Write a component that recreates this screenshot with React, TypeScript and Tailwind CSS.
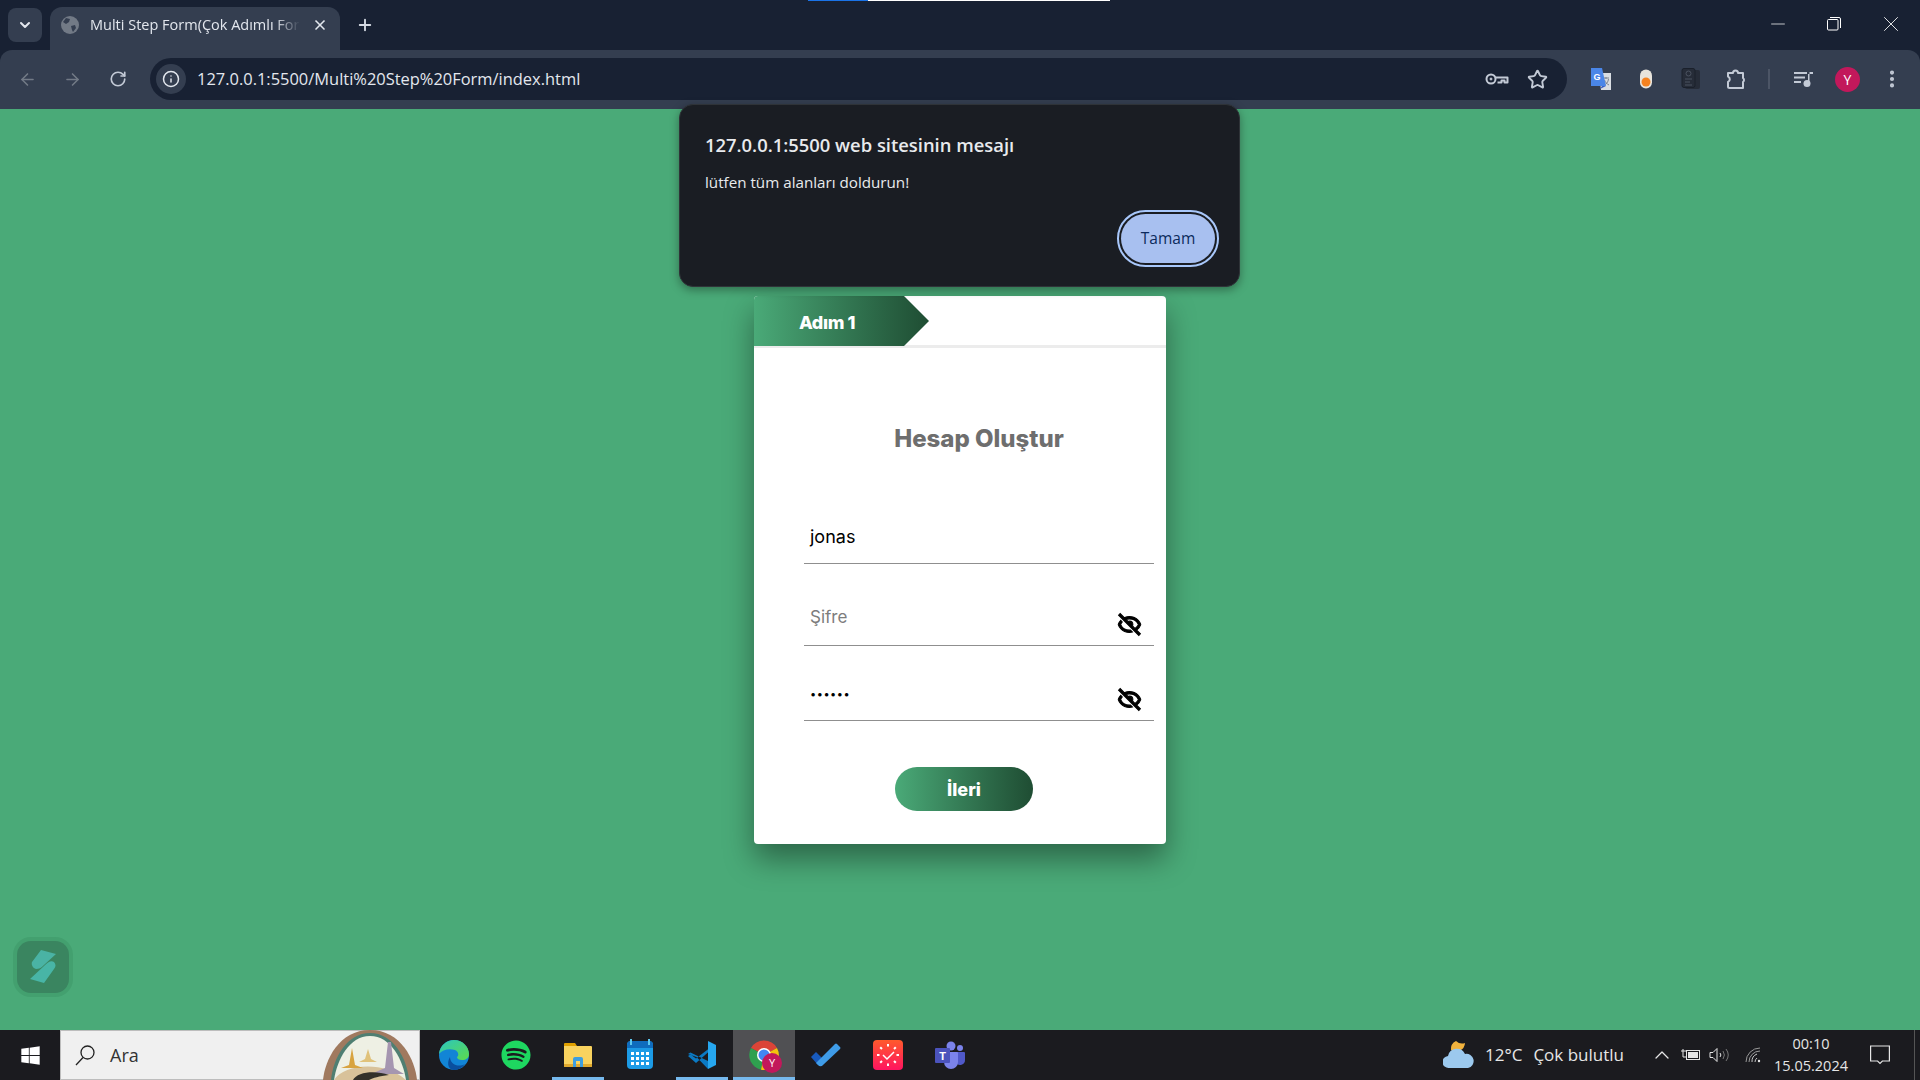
import React from 'react';
import { ArrowLeft, ArrowRight, ChevronDown, ChevronUp, EllipsisVertical, Info, Minus, Plus, RotateCw, Star, X } from 'lucide-react';
import { BiHide } from 'react-icons/bi';
import { FaSpotify, FaWindows } from 'react-icons/fa';

function Globe() {
  return (
    <svg width="18" height="18" viewBox="0 0 18 18">
      <circle cx="9" cy="9" r="9" fill="#727a86" />
      <path d="M5 2l4 1-1 3-3 2-3-2zM10 10l4-1 1 3-3 4-1-2z" fill="#343e50" />
    </svg>
  );
}

function KeyIcon() {
  return (
    <svg width="24" height="14" viewBox="0 0 24 14" fill="none" stroke="#c3cad6" strokeWidth="2">
      <circle cx="6" cy="7" r="4.500" />
      <circle cx="6" cy="7" r="1" fill="#c3cad6" strokeWidth="1" />
      <path d="M10.500 5.500H22.500V10.500H19.500V8.500H16.500V10.500H12.500" strokeLinejoin="round" />
    </svg>
  );
}

function TranslateIcon() {
  return (
    <svg width="22" height="22" viewBox="0 0 22 22">
      <path d="M9 5h12v17H11z" fill="#d9dde2" />
      <path d="M13 10h6M16 9v2M14 17c3-1 4-3 4.500-6M14.500 12c1 2.500 2.500 4 4.500 5" stroke="#7c8490" strokeWidth="1" fill="none" />
      <path d="M1 0h11l4 18H1z" fill="#4a86e8" />
      <path d="M12 18l-2 3 6-3z" fill="#3b5fc0" />
      <text x="3.500" y="12" fontSize="9" fontWeight="700" fill="#fff" fontFamily="Liberation Sans">G</text>
    </svg>
  );
}

function BlobIcon() {
  return (
    <svg width="14" height="20" viewBox="0 0 14 20">
      <rect x="1" y="0.500" width="12" height="19" rx="6" fill="#e8e4dc" />
      <circle cx="7" cy="13" r="4.500" fill="#f58220" />
    </svg>
  );
}

function DarkCardIcon() {
  return (
    <svg width="20" height="22" viewBox="0 0 20 22">
      <rect x="4" y="2" width="15" height="19" rx="2" fill="#262c38" />
      <rect x="1" y="0.500" width="13" height="19" rx="2" fill="#262c38" stroke="#1a202b" />
      <circle cx="7.500" cy="5.500" r="2.500" fill="none" stroke="#4b5361" />
      <path d="M4 11h7M4 14h5M4 17h7" stroke="#4b5361" />
    </svg>
  );
}

function PuzzleIcon() {
  return (
    <svg width="22" height="22" viewBox="0 0 22 22" fill="none" stroke="#c3cad6" strokeWidth="2" strokeLinejoin="round">
      <path d="M2 5h5a2.500 2.500 0 0 1 5 0h5v5a2.500 2.500 0 0 1 0 4v6H3.500a1.500 1.500 0 0 1-1.500-1.500V14a3 3 0 0 0 0-5.500z" />
    </svg>
  );
}

function MediaIcon() {
  return (
    <svg width="20" height="16" viewBox="0 0 20 16" fill="#c3cad6">
      <path d="M0 1h13v2H0zM0 5.500h11v2H0zM0 10h7v2H0z" />
      <path d="M14 3h5V1h-3.500v10H14z" />
      <circle cx="13" cy="12.500" r="3.500" />
    </svg>
  );
}

function EdgeIcon() {
  return (
    <svg width="32" height="32" viewBox="0 0 32 32">
      <defs>
        <linearGradient id="edgeA" x1="0" y1="0" x2="1" y2="1">
          <stop offset="0" stopColor="#2bc6c0" />
          <stop offset="1" stopColor="#5ddb4a" />
        </linearGradient>
      </defs>
      <circle cx="16" cy="16" r="15" fill="#1285d6" />
      <path d="M1 15C2 6 9 1 16 1c9 0 15 7 15 14 0 4-3 6-7 6-3 0-5-1-5-3 2-1 2-5-2-7-6-2-13 0-16 4z" fill="url(#edgeA)" />
      <path d="M12 18c0 7 8 11 15 7-3 4-7 6-11 6-5 0-8-6-4-13z" fill="#0a4f9e" />
    </svg>
  );
}

function ExplorerIcon() {
  return (
    <svg width="28" height="26" viewBox="0 0 28 26">
      <path d="M0 2a1 1 0 0 1 1-1h10l2 3h-13z" fill="#e0a000" />
      <path d="M0 4h27a1 1 0 0 1 1 1v19a1 1 0 0 1-1 1H1a1 1 0 0 1-1-1z" fill="#f9d35f" />
      <path d="M0 22h28v2a1 1 0 0 1-1 1H1a1 1 0 0 1-1-1z" fill="#e0a92e" />
      <path d="M9 25v-8a2 2 0 0 1 2-2h6a2 2 0 0 1 2 2v8h-3v-6h-4v6z" fill="#3d9ee0" />
    </svg>
  );
}

function CalendarIcon() {
  const dots = [0, 1, 2, 3, 4, 5, 6, 7, 8, 9, 10, 11];
  return (
    <div className="relative h-[28px] w-[26px] rounded-sm bg-[#1c9be6]">
      <div className="h-[7px] rounded-t-sm bg-[#0f6cbd]" />
      <div className="absolute top-[-2px] left-[3px] h-[6px] w-[2px] bg-[#5cc8f0]" />
      <div className="absolute top-[-2px] right-[3px] h-[6px] w-[2px] bg-[#5cc8f0]" />
      <div className="mt-[4px] ml-[4px] grid w-[18px] grid-cols-4 gap-[2px]">
        {dots.map((d) => (
          <div key={d} className="h-[3px] w-[3px] bg-white" />
        ))}
      </div>
    </div>
  );
}

function VsCodeIcon() {
  return (
    <svg width="30" height="30" viewBox="0 0 30 30">
      <path d="M22 8.500L9 18.500 3.500 14.500 1 16l8 7 13-11.500zM1 14l2.500-1.500L22 21.500V22L21 29 9.500 17z" fill="#0b7ac4" />
      <path d="M21 1l8 4v20l-8 4z" fill="#26a7ef" />
    </svg>
  );
}

function ChromeIcon() {
  return (
    <div className="relative h-[30px] w-[30px]">
      <svg width="30" height="30" viewBox="0 0 30 30">
        <path d="M15 15L2 8A15 15 0 0 1 28 8z" fill="#db4437" />
        <path d="M15 15L2 8A15 15 0 0 0 12 29.700z" fill="#2fa04f" />
        <path d="M15 15L28 8A15 15 0 0 1 12 29.700z" fill="#f4c20d" />
        <circle cx="15" cy="15" r="7" fill="#fff" />
        <circle cx="15" cy="15" r="5.500" fill="#4285f4" />
      </svg>
      <div className="absolute top-[13px] left-[13px] flex h-[20px] w-[20px] items-center justify-center rounded-full bg-[#c2185b] text-[11px] text-white">Y</div>
    </div>
  );
}

function TodoIcon() {
  return (
    <svg width="30" height="24" viewBox="0 0 30 24">
      <path d="M0 14l5-5 7 7-5 6z" fill="#185abd" />
      <path d="M7 22l-2-2L24 1a1.500 1.500 0 0 1 2 0l3 3a1.500 1.500 0 0 1 0 2L12 22a3 3 0 0 1-5 0z" fill="#3f9ce8" />
    </svg>
  );
}

function ClockAppIcon() {
  const ticks = [0, 45, 90, 135, 180, 225, 270, 315];
  return (
    <svg width="30" height="30" viewBox="0 0 30 30">
      <defs>
        <linearGradient id="clockBg" x1="0" y1="0" x2="0" y2="1">
          <stop offset="0" stopColor="#ff5a2c" />
          <stop offset="1" stopColor="#ff1460" />
        </linearGradient>
      </defs>
      <rect width="30" height="30" rx="4" fill="url(#clockBg)" />
      {ticks.map((t) => (
        <rect key={t} x="14" y="4" width="2" height="2.500" fill="#fff" transform={`rotate(${t} 15 15)`} />
      ))}
      <path d="M10 15l4 4 7-7" fill="none" stroke="#fff" strokeWidth="1.500" />
    </svg>
  );
}

function TeamsIcon() {
  return (
    <svg width="30" height="28" viewBox="0 0 30 28">
      <circle cx="25" cy="7" r="3" fill="#7b83eb" />
      <path d="M20 11h9a1 1 0 0 1 1 1v7a5 5 0 0 1-9 3z" fill="#5059c9" />
      <circle cx="16" cy="5" r="4.500" fill="#7b83eb" />
      <path d="M9 11h13a1 1 0 0 1 1 1v9a7 7 0 0 1-14 0z" fill="#7b83eb" />
      <rect x="0" y="7" width="15" height="15" rx="1" fill="#4b53bc" />
      <text x="7.500" y="19" textAnchor="middle" fontSize="11" fontWeight="700" fill="#fff" fontFamily="Liberation Sans">T</text>
    </svg>
  );
}

function Doodle() {
  return (
    <svg width="98" height="50" viewBox="0 0 98 50">
      <path d="M2 50C4 30 18 0 49 0s45 30 47 50z" fill="#a0795f" />
      <path d="M10 50C12 28 26 3 49 3s37 25 39 47z" fill="#4f7f72" />
      <path d="M13 50C16 30 28 6 49 6s33 24 36 44z" fill="#eef0e4" />
      <path d="M13 50c10-16 50-20 72 0z" fill="#d8c29a" />
      <path d="M20 38l8-3 3-17 3 17 8 3z" fill="#d8a33f" />
      <path d="M38 32l6-3 3-10 3 10 6 3z" fill="#e0c27a" />
      <path d="M50 44l14-6 3-26h3l3 26 10 6z" fill="#a596b0" />
      <path d="M32 50c4-8 22-10 36-5-10 1-16 3-20 5z" fill="#33312a" />
    </svg>
  );
}

function SideWidget() {
  return (
    <div className="absolute bottom-[33px] left-[13px] flex h-[60px] w-[60px] items-center justify-center rounded-[18px] bg-[#43a06f]">
      <div className="flex h-[52px] w-[52px] items-center justify-center rounded-[14px] bg-[#3a8560]">
        <svg width="26" height="34" viewBox="0 0 26 34">
          <path d="M11 0l15 4L14 15c-3 3-5 4-8 4-3-1-5-4-4-7z" fill="#4ab3a4" />
          <path d="M14 16c4-4 7-6 10-4 2 2 2 5 0 7L14 33 0 29z" fill="#48b5a6" />
        </svg>
      </div>
    </div>
  );
}

const taskbarApps = [
  { name: 'edge', icon: <EdgeIcon />, bar: false, active: false },
  { name: 'spotify', icon: <FaSpotify className="h-[30px] w-[30px] text-[#1ed760]" />, bar: false, active: false },
  { name: 'explorer', icon: <ExplorerIcon />, bar: true, active: false },
  { name: 'calendar', icon: <CalendarIcon />, bar: false, active: false },
  { name: 'vscode', icon: <VsCodeIcon />, bar: true, active: false },
  { name: 'chrome', icon: <ChromeIcon />, bar: true, active: true },
  { name: 'todo', icon: <TodoIcon />, bar: false, active: false },
  { name: 'clock', icon: <ClockAppIcon />, bar: false, active: false },
  { name: 'teams', icon: <TeamsIcon />, bar: false, active: false },
];

function BrowserChrome() {
  return (
    <div className="shrink-0 bg-[#182133] font-['Open_Sans',sans-serif]">
      {/* Tab strip */}
      <div className="relative flex h-[50px] pt-[7px]">
        <div className="absolute top-0 left-[808px] flex h-px w-[302px]">
          <div className="w-[60px] bg-[#1a73e8]" />
          <div className="flex-1 bg-white" />
        </div>
        <div className="mt-[1px] ml-[8px] flex h-[34px] w-[34px] items-center justify-center rounded-lg bg-[#343e50]">
          <ChevronDown size={16} strokeWidth={3} className="text-[#e3e7ee]" />
        </div>
        <div className="ml-[8px] flex h-[43px] w-[290px] items-center rounded-t-xl bg-[#343e50] pb-[7px] pl-[11px]">
          <Globe />
          <span className="ml-[11px] w-[210px] overflow-hidden text-[14.5px] whitespace-nowrap text-[#e3e7ee] [mask-image:linear-gradient(to_right,black_88%,transparent)]">Multi Step Form(Çok Adımlı For</span>
          <X size={16} strokeWidth={2.500} className="ml-[12px] text-[#e3e7ee]" />
        </div>
        <Plus size={18} strokeWidth={2.500} className="mt-[9px] ml-[16px] text-[#d5dae3]" />
        <div className="ml-auto flex items-start">
          <div className="flex h-[34px] w-[56px] items-center justify-center"><Minus size={22} strokeWidth={0.8} className="text-white" /></div>
          <div className="flex h-[34px] w-[56px] items-center justify-center">
            <svg width="14" height="14" viewBox="0 0 14 14" fill="none" stroke="#fff">
              <rect x="0.500" y="2.500" width="10.500" height="10.500" rx="1" />
              <path d="M3 .5h9a1.500 1.500 0 0 1 1.500 1.500v9" />
            </svg>
          </div>
          <div className="flex h-[34px] w-[58px] items-center justify-center"><X size={26} strokeWidth={0.8} className="text-white" /></div>
        </div>
      </div>
      {/* Toolbar */}
      <div className="flex h-[59px] items-start rounded-t-xl bg-[#343e50] pt-[8px]">
        <div className="flex h-[42px] w-[150px] items-center pl-[5px] text-[#727a86]">
          <div className="flex w-[45px] justify-center"><ArrowLeft size={19} /></div>
          <div className="flex w-[45px] justify-center"><ArrowRight size={19} /></div>
          <div className="flex w-[45px] justify-center text-[#c3cad6]"><RotateCw size={18} strokeWidth={2.200} /></div>
        </div>
        <div className="flex h-[42px] w-[1417px] items-center rounded-full bg-[#182133] pr-[19px] pl-[6px]">
          <div className="flex h-[30px] w-[30px] items-center justify-center rounded-full bg-[#343e50]">
            <Info size={18} className="text-[#e3e7ee]" />
          </div>
          <span className="ml-[11px] text-[16.45px] text-[#e3e7ee]">127.0.0.1:5500/Multi%20Step%20Form/index.html</span>
          <div className="ml-auto"><KeyIcon /></div>
          <Star size={21} strokeWidth={2.200} className="ml-[18px] text-[#c3cad6]" />
        </div>
        <div className="flex h-[42px] flex-1 items-center text-[#c3cad6]">
          <div className="ml-[22px] flex w-[24px] justify-center"><TranslateIcon /></div>
          <div className="ml-[21px] flex w-[24px] justify-center"><BlobIcon /></div>
          <div className="ml-[21px] flex w-[24px] justify-center"><DarkCardIcon /></div>
          <div className="ml-[22px] flex w-[24px] justify-center"><PuzzleIcon /></div>
          <div className="ml-[19px] h-[20px] w-[2px] bg-[#4c5566]" />
          <div className="ml-[22px] flex w-[24px] justify-center"><MediaIcon /></div>
          <div className="ml-[19px] flex h-[25px] w-[25px] items-center justify-center rounded-full bg-[#c2185b] text-[14px] text-white">Y</div>
          <EllipsisVertical size={22} strokeWidth={2.500} className="ml-[21px]" />
        </div>
      </div>
    </div>
  );
}

function AlertDialog() {
  return (
    <div className="absolute top-[-5px] left-[679px] h-[183px] w-[561px] rounded-[14px] border border-[#2f3338] bg-[#1a1d23] pt-[28px] pr-[20px] pl-[25px] font-['Open_Sans',sans-serif] shadow-[0_3px_10px_rgba(0,0,0,0.35)]">
      <div className="text-[18.4px] leading-[24px] font-semibold text-[#e8eaed]">127.0.0.1:5500 web sitesinin mesajı</div>
      <div className="mt-[15px] text-[15.2px] leading-[20px] text-[#e8eaed]">lütfen tüm alanları doldurun!</div>
      <div className="mt-[18px] flex justify-end">
        <div className="flex h-[57px] w-[102px] items-center justify-center rounded-full border-2 border-[#a8c7fa] p-[2px]">
          <div className="flex h-full w-full items-center justify-center rounded-full bg-[#a8c0f0] text-[15.5px] text-[#0b2a5c]">Tamam</div>
        </div>
      </div>
    </div>
  );
}

function FormCard() {
  return (
    <div className="mx-auto mt-[187px] h-[548px] w-[412px] overflow-hidden rounded-[4px] bg-white font-['Inter',sans-serif] shadow-[0_15px_30px_rgba(0,0,0,0.4)]">
      <div className="flex h-[52px] border-b-[3px] border-[#ececec]">
        <div className="flex h-[50px] w-[175px] items-center bg-gradient-to-r from-[#4aaa78] to-[#1f4d33] pt-[2px] pl-[45px] text-[18px] font-extrabold tracking-[-0.4px] text-white [clip-path:polygon(0_0,150px_0,175px_50%,150px_100%,0_100%)]">
          Adım 1
        </div>
      </div>
      <div className="pr-[12px] pl-[50px]">
        <h2 className="mt-[73px] text-center text-[24px] leading-[36px] font-extrabold text-[#6e6e6e]">Hesap Oluştur</h2>
        <div className="mt-[49px] flex h-[58px] items-center border-b border-[#8f8f8f] px-[6px] pt-[4px] text-[18px] text-black">jonas</div>
        <div className="mt-[24px] flex h-[58px] items-center justify-between border-b border-[#8f8f8f] pr-[11px] pl-[6px] text-[17px] text-[#7d7d7d]">
          <span className="mb-[-2px]">Şifre</span>
          <BiHide size={27} stroke="currentColor" strokeWidth={0.9} className="mt-[15px] text-black" />
        </div>
        <div className="mt-[17px] flex h-[58px] items-center justify-between border-b border-[#8f8f8f] pr-[11px] pl-[6px] text-black">
          <span className="mt-[5px] text-[11px] tracking-[0.5px]">••••••</span>
          <BiHide size={27} stroke="currentColor" strokeWidth={0.9} className="mt-[15px]" />
        </div>
        <button className="mt-[46px] ml-[91px] h-[44px] w-[138px] rounded-full bg-gradient-to-r from-[#4aaa78] to-[#1f4d33] text-[18px] font-extrabold text-white">
          İleri
        </button>
      </div>
    </div>
  );
}

function Taskbar() {
  return (
    <div className="flex h-[50px] shrink-0 items-center bg-[#1b1b1f] font-['Open_Sans',sans-serif] text-[#e6e6e6]">
      <div className="flex w-[60px] justify-center"><FaWindows size={21} className="text-white" /></div>
      <div className="flex h-full w-[360px] items-center justify-between border border-[#bdbdbd] bg-[#f0f0f0] pl-[14px]">
        <div className="flex items-center">
          <svg width="20" height="21" viewBox="0 0 20 21" fill="none" stroke="#222" strokeWidth="1.300">
            <circle cx="12.500" cy="7.500" r="6.500" />
            <path d="M8 12.500L1 20" />
          </svg>
          <span className="ml-[15px] text-[18px] text-[#333]">Ara</span>
        </div>
        <Doodle />
      </div>
      <div className="ml-[3px] flex h-full">
        {taskbarApps.map((app) => (
          <div key={app.name} className={`relative flex h-full w-[62px] items-center justify-center ${app.active ? 'bg-[#505053]' : ''}`}>
            {app.icon}
            {app.bar && <div className={`absolute bottom-0 h-[3px] bg-[#76b9ed] ${app.active ? 'inset-x-0' : 'inset-x-[5px]'}`} />}
          </div>
        ))}
      </div>
      <div className="ml-auto flex h-full items-center">
        <svg width="32" height="30" viewBox="0 0 32 30">
          <path d="M8 10A9 9 0 0 0 22 3 9 9 0 0 1 13 1 9 9 0 0 0 8 10z" fill="#f2b33d" />
          <path d="M6 28a6 6 0 0 1-1-12 9 9 0 0 1 17-2 7 7 0 0 1 3 14z" fill="#9cc9ee" />
        </svg>
        <span className="ml-[10px] text-[17px]">12°C</span>
        <span className="ml-[11px] text-[17px]">Çok bulutlu</span>
        <ChevronUp size={24} strokeWidth={1.300} className="ml-[26px]" />
        <svg width="20" height="14" viewBox="0 0 20 14" fill="none" stroke="#e6e6e6" className="ml-[7px]">
          <rect x="5.500" y="2.500" width="13" height="9" />
          <rect x="7" y="4" width="10" height="6" fill="#e6e6e6" stroke="none" />
          <path d="M0 3h5M2 1v4M2 5v4h3" />
        </svg>
        <svg width="22" height="16" viewBox="0 0 22 16" fill="none" stroke="#e6e6e6" className="ml-[8px]">
          <path d="M1 5.500h3L8 1.500v13l-4-4H1z" />
          <path d="M11 6a3 3 0 0 1 0 4" />
          <path d="M14 4a7 7 0 0 1 0 8M17 2a10 10 0 0 1 0 12" stroke="#777" />
        </svg>
        <svg width="16" height="16" viewBox="0 0 16 16" fill="none" stroke="#c8c8c8" className="ml-[14px]">
          <path d="M1 15A14 14 0 0 1 15 1M4 15A11 11 0 0 1 15 4" stroke="#999" />
          <path d="M7 15A8 8 0 0 1 12 7M10 15a5 5 0 0 1 2-4" />
          <circle cx="14" cy="14" r="1.200" fill="#e6e6e6" stroke="none" />
        </svg>
        <div className="ml-[6px] flex w-[88px] flex-col items-center text-[14.5px] leading-[22px]">
          <span>00:10</span>
          <span>15.05.2024</span>
        </div>
        <svg width="20" height="20" viewBox="0 0 20 20" fill="none" stroke="#e6e6e6" strokeWidth="1.200" className="ml-[15px]">
          <path d="M.6 1h18.800v15h-7l-2.400 2.500L7.600 16H.6z" />
        </svg>
        <div className="ml-[24px] h-full w-[6px] border-l border-[#555]" />
      </div>
    </div>
  );
}

export default function App() {
  return (
    <div className="flex h-screen flex-col overflow-hidden bg-[#4aaa78]">
      <BrowserChrome />
      <main className="relative flex-1">
        <FormCard />
        <AlertDialog />
        <SideWidget />
      </main>
      <Taskbar />
    </div>
  );
}
